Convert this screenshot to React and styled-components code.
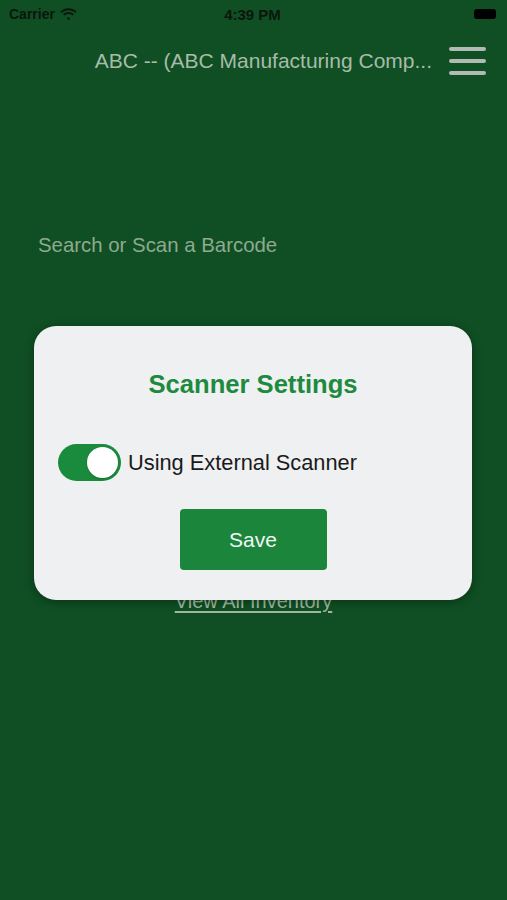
import React, { useState } from "react";
import styled, { createGlobalStyle } from "styled-components";

const GlobalStyle = createGlobalStyle`
  html, body {
    margin: 0;
    padding: 0;
    background: #0f4f23;
  }
  body {
    font-family: "Liberation Sans", Arial, sans-serif;
  }
`;

const Screen = styled.div`
  width: 507px;
  min-height: 900px;
  background: #0f4f23;
  display: flex;
  flex-direction: column;
`;

const StatusBar = styled.div`
  height: 28px;
  padding: 0 11px 0 9px;
  display: flex;
  align-items: center;
  justify-content: space-between;
  color: #0b160d;
  font-size: 14px;
  font-weight: 600;
`;

const StatusSide = styled.div`
  width: 90px;
  display: flex;
  align-items: center;
  gap: 5px;
  justify-content: ${p => (p.$right ? "flex-end" : "flex-start")};
`;

const Clock = styled.span`
  font-size: 15px;
  font-weight: 700;
`;

const Battery = styled.div`
  width: 22px;
  height: 10px;
  border-radius: 3px;
  background: #000;
`;

const Header = styled.div`
  height: 66px;
  padding: 0 21px 0 0;
  display: flex;
  align-items: center;
  justify-content: flex-end;
  gap: 17px;
`;

const Title = styled.div`
  color: #a7bca8;
  font-size: 21px;
  white-space: nowrap;
`;

const Burger = styled.div`
  width: 37px;
  display: flex;
  flex-direction: column;
  gap: 8px;
  span {
    height: 4px;
    border-radius: 2px;
    background: #b3bab3;
  }
`;

const Content = styled.div`
  padding: 137px 38px 0;
  display: flex;
  flex-direction: column;
`;

const SearchInput = styled.input`
  border: none;
  outline: none;
  background: transparent;
  padding: 0;
  height: 28px;
  font-family: inherit;
  font-size: 20.4px;
  color: #cfdccf;
  &::placeholder {
    color: #8eaa90;
  }
`;

const InventoryLink = styled.a`
  margin-top: 331px;
  align-self: center;
  color: #9fb7a0;
  font-size: 20px;
  text-decoration: underline;
  text-underline-offset: 3px;
`;

const Overlay = styled.div`
  position: absolute;
  left: 0;
  top: 0;
  width: 507px;
  height: 900px;
  display: flex;
  justify-content: center;
  align-items: flex-start;
  padding: 326px 1px 0 0;
  box-sizing: border-box;
`;

const Card = styled.div`
  width: 438px;
  height: 274px;
  box-sizing: border-box;
  background: #eff0f2;
  border-radius: 22px;
  box-shadow: 0 2px 10px rgba(0, 0, 0, 0.35);
  padding: 43px 24px 0;
  display: flex;
  flex-direction: column;
  align-items: center;
`;

const CardTitle = styled.h2`
  margin: 0;
  color: #1d8a3e;
  font-size: 25.6px;
  font-weight: 700;
  line-height: 31px;
`;

const ToggleRow = styled.label`
  align-self: stretch;
  margin-top: 44px;
  display: flex;
  align-items: center;
  gap: 7px;
  color: #1a1a1a;
  font-size: 21.8px;
`;

const Track = styled.button`
  width: 63px;
  height: 37px;
  border: none;
  border-radius: 19px;
  background: ${p => (p.$on ? "#1a8a3c" : "#c8c9cc")};
  display: flex;
  align-items: center;
  justify-content: ${p => (p.$on ? "flex-end" : "flex-start")};
  padding: 0 3px;
  box-sizing: border-box;
  cursor: pointer;
`;

const Knob = styled.span`
  width: 31px;
  height: 31px;
  border-radius: 50%;
  background: #fff;
  box-shadow: 0 1px 2px rgba(0, 0, 0, 0.2);
`;

const SaveButton = styled.button`
  margin-top: 28px;
  width: 147px;
  height: 61px;
  border: none;
  border-radius: 4px;
  background: #1b853c;
  color: #f4f8f4;
  font-family: inherit;
  font-size: 21px;
  cursor: pointer;
`;

const Wifi = () => (
  <svg width="17" height="13" viewBox="0 0 17 13">
    <path d="M8.5 2.2c2.6 0 5 1 6.8 2.7l1.3-1.4C14.5 1.4 11.6.2 8.5.2S2.5 1.4.4 3.5l1.3 1.4C3.5 3.2 5.9 2.2 8.5 2.2z" fill="#0b160d" />
    <path d="M8.5 6c1.6 0 3 .6 4.1 1.6l1.3-1.4C12.5 4.8 10.6 4 8.5 4S4.5 4.8 3.1 6.2l1.3 1.4C5.5 6.6 6.9 6 8.5 6z" fill="#0b160d" />
    <path d="M8.5 9.6c.7 0 1.3.3 1.8.7L8.5 12.2 6.7 10.3c.5-.4 1.1-.7 1.8-.7z" fill="#0b160d" />
  </svg>
);

const App = () => {
  const [external, setExternal] = useState(true);
  return (
    <>
      <GlobalStyle />
      <Screen>
        <StatusBar>
          <StatusSide>
            Carrier <Wifi />
          </StatusSide>
          <Clock>4:39 PM</Clock>
          <StatusSide $right>
            <Battery />
          </StatusSide>
        </StatusBar>
        <Header>
          <Title>ABC -- (ABC Manufacturing Comp...</Title>
          <Burger>
            <span />
            <span />
            <span />
          </Burger>
        </Header>
        <Content>
          <SearchInput placeholder="Search or Scan a Barcode" />
          <InventoryLink>View All Inventory</InventoryLink>
        </Content>
      </Screen>
      <Overlay>
        <Card>
          <CardTitle>Scanner Settings</CardTitle>
          <ToggleRow>
            <Track $on={external} onClick={() => setExternal(v => !v)}>
              <Knob />
            </Track>
            Using External Scanner
          </ToggleRow>
          <SaveButton>Save</SaveButton>
        </Card>
      </Overlay>
    </>
  );
};

export default App;
